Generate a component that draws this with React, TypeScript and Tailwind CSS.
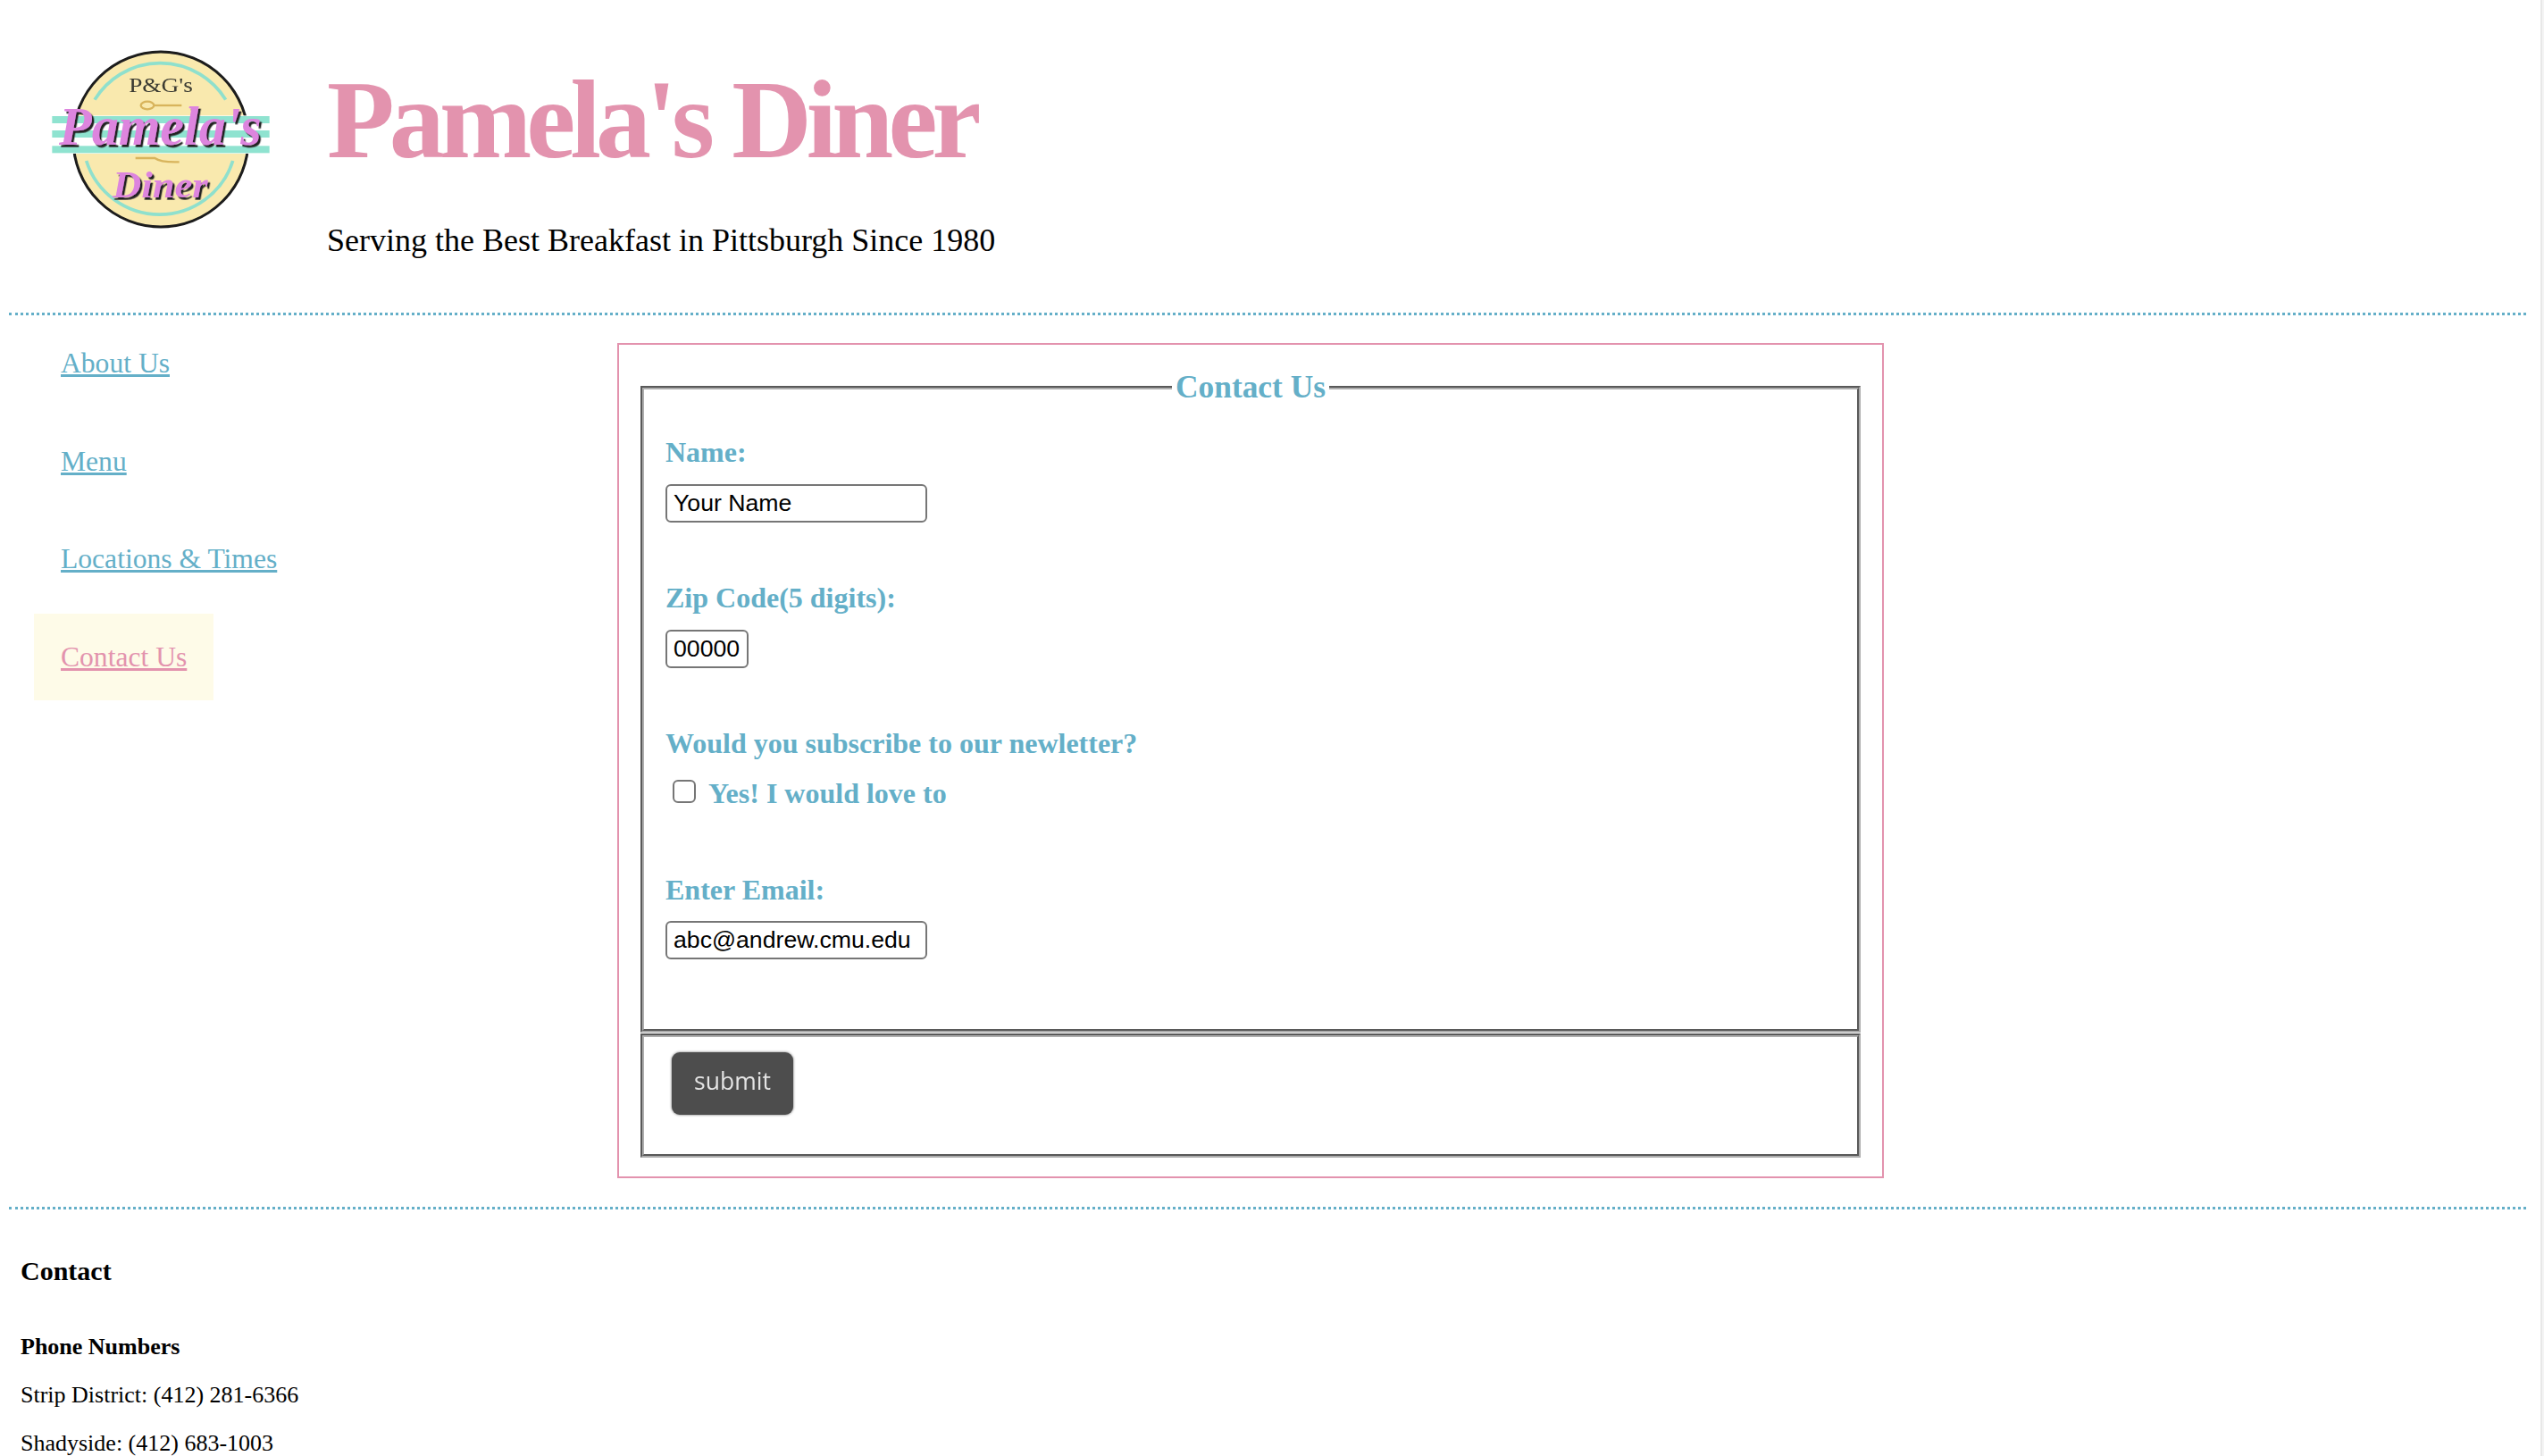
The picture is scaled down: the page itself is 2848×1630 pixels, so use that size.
import React from "react";

const navItems = ["About Us", "Menu", "Locations & Times", "Contact Us"];

const Logo = () => (
  <svg viewBox="0 0 900 750" className="w-[300px] h-[250px] shrink-0" role="img" aria-label="Pamela's Diner logo">
    <defs>
      <filter id="soft" x="-5%" y="-5%" width="110%" height="110%">
        <feGaussianBlur stdDeviation="2.2" />
      </filter>
      <filter id="script" x="-10%" y="-10%" width="120%" height="130%">
        <feDropShadow dx="7" dy="8" stdDeviation="0" floodColor="#222" />
      </filter>
    </defs>
    <g filter="url(#soft)">
      <circle cx="450" cy="378" r="294" fill="#f9e9ae" stroke="#1a1a1a" strokeWidth="9" />
      <path d="M228 245 A258 258 0 0 1 668 245" fill="none" stroke="#8fe0cd" strokeWidth="11" />
      <path d="M200 450 A258 258 0 0 0 692 450" fill="none" stroke="#8fe0cd" strokeWidth="11" />
      <rect x="85" y="298" width="730" height="128" fill="#fff" />
      <rect x="85" y="300" width="730" height="24" fill="#8fe3d0" />
      <rect x="85" y="348" width="730" height="24" fill="#8fe3d0" />
      <rect x="85" y="400" width="730" height="24" fill="#8fe3d0" />
      <text x="450" y="218" textAnchor="middle" fontFamily="'Liberation Serif', serif" fontSize="72" fill="#3a3a32" textLength="215" lengthAdjust="spacingAndGlyphs">P&amp;G's</text>
      <g fill="none" stroke="#d8b45c" strokeWidth="7">
        <ellipse cx="405" cy="264" rx="22" ry="13" />
        <path d="M428 264 H520" />
        <path d="M365 441 H430 Q450 456 512 454" />
      </g>
      <text
        x="448"
        y="395"
        textAnchor="middle"
        fontFamily="'Liberation Serif', serif"
        fontStyle="italic"
        fontWeight="700"
        fontSize="185"
        textLength="680"
        lengthAdjust="spacingAndGlyphs"
        fill="#dd85de"
        filter="url(#script)"
      >
        Pamela's
      </text>
      <text
        x="448"
        y="572"
        textAnchor="middle"
        fontFamily="'Liberation Serif', serif"
        fontStyle="italic"
        fontWeight="700"
        fontSize="125"
        textLength="320"
        lengthAdjust="spacingAndGlyphs"
        fill="#dd85de"
        filter="url(#script)"
      >
        Diner
      </text>
    </g>
  </svg>
);

const Label = ({ children }: { children: React.ReactNode }) => (
  <label className="block h-[37px] leading-[37px] text-[32px] font-bold text-[#64afc8]">{children}</label>
);

const TextField = ({ value, width }: { value: string; width: string }) => (
  <input
    readOnly
    value={value}
    className={`block h-[43px] ${width} border-[2.5px] border-[#767676] rounded-[6px] px-[7px] bg-white text-black text-[26.67px] font-['Liberation_Sans',Arial,sans-serif] outline-none`}
  />
);

export default function App() {
  return (
    <div className="flex h-screen overflow-hidden bg-white text-black font-['Liberation_Serif','Times_New_Roman',serif]">
      <div className="flex-1 min-w-0">
        <header className="flex h-[350px] pl-[30px] pt-[30px]">
          <Logo />
          <div className="ml-[36px]">
            <h1 className="mt-[40px] text-[124px] leading-[130px] font-bold tracking-[-5.9px] text-[#e393ae]">
              Pamela's Diner
            </h1>
            <p className="mt-[49px] text-[36px] leading-[41px]">Serving the Best Breakfast in Pittsburgh Since 1980</p>
          </div>
        </header>
        <hr className="ml-[10px] mr-[16px] border-0 border-t-[3px] border-dotted border-[#64afc8]" />
        <div className="flex h-[998px] items-start">
          <nav className="w-[691px] shrink-0 pl-[38px] pt-[5px] flex flex-col items-start gap-[12.5px]">
            {navItems.map((item, i) => (
              <a
                key={item}
                href="#"
                className={`block h-[97px] px-[30px] pt-[30px] leading-[37px] text-[31.6px] underline ${
                  i === 3 ? "bg-[#fefbe8] text-[#e393ae]" : "text-[#64afc8]"
                }`}
              >
                {item}
              </a>
            ))}
          </nav>
          <main className="mt-[31px] w-[1418px] h-[935px] border-[2.5px] border-[#e393ae] px-[24px] pt-[27px]">
            <fieldset className="h-[743px] border-[4px] [border-style:groove] border-[#adadad] px-[24px]">
              <legend className="mx-auto px-[4px] text-[35.4px] leading-[41px] font-bold text-[#64afc8]">Contact Us</legend>
              <div className="pt-[34px]">
                <Label>Name:</Label>
                <div className="mt-[17px] mb-[66px]">
                  <TextField value="Your Name" width="w-[293px]" />
                </div>
                <Label>Zip Code(5 digits):</Label>
                <div className="mt-[17px] mb-[66px]">
                  <TextField value="00000" width="w-[93px]" />
                </div>
                <Label>Would you subscribe to our newletter?</Label>
                <div className="mt-[18px] mb-[72px] flex items-center h-[37px]">
                  <input type="checkbox" readOnly className="ml-[8px] mb-[4px] w-[26px] h-[26px] appearance-none border-[2.5px] border-[#767676] rounded-[6px] bg-white" />
                  <span className="ml-[14px] text-[32px] font-bold text-[#64afc8]">Yes! I would love to</span>
                </div>
                <Label>Enter Email:</Label>
                <div className="mt-[16px]">
                  <TextField value="abc@andrew.cmu.edu" width="w-[293px]" />
                </div>
              </div>
            </fieldset>
            <fieldset className="mt-[1px] h-[139px] border-[4px] [border-style:groove] border-[#adadad] pl-[31px] pt-[17px]">
              <button
                type="button"
                className="w-[136px] h-[70px] pb-[4px] rounded-[9px] bg-[#4d4d4d] text-[#e4e4e4] text-[26.5px] font-['Open_Sans',sans-serif] shadow-[0_0_3px_rgba(0,0,0,0.6)] blur-[0.6px]"
              >
                submit
              </button>
            </fieldset>
          </main>
        </div>
        <hr className="ml-[10px] mr-[16px] border-0 border-t-[3px] border-dotted border-[#64afc8]" />
        <footer className="pl-[23px]">
          <h3 className="mt-[51px] text-[30px] leading-[35px] font-bold">Contact</h3>
          <p className="mt-[53px] text-[26px] leading-[30px] font-bold">Phone Numbers</p>
          <p className="mt-[24px] text-[26px] leading-[30px]">Strip District: (412) 281-6366</p>
          <p className="mt-[24px] text-[26px] leading-[30px]">Shadyside: (412) 683-1003</p>
        </footer>
      </div>
      <div className="w-[4px] shrink-0 bg-[#f4f4f4] border-l-[2px] border-[#e8e8e8]" />
    </div>
  );
}
